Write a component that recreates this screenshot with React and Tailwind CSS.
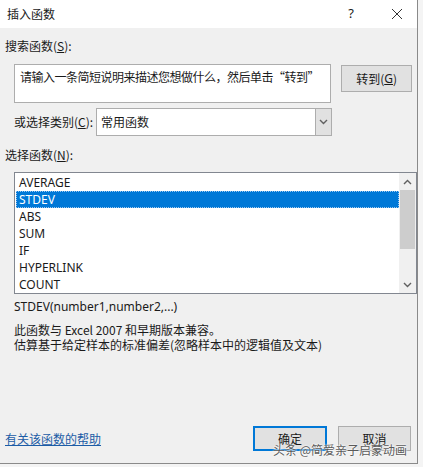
import React from 'react'

const cjk = { fontFamily: '"Noto Sans CJK SC", "Noto Sans", sans-serif' }
const lat = { fontFamily: '"Noto Sans", "Noto Sans CJK SC", sans-serif' }

const items = ['AVERAGE', 'STDEV', 'ABS', 'SUM', 'IF', 'HYPERLINK', 'COUNT']

function Chevron({ up }) {
  return (
    <svg width="9" height="6" viewBox="0 0 9 6" className="block">
      <path d={up ? 'M1 5 L4.5 1.5 L8 5' : 'M1 1 L4.5 4.5 L8 1'} fill="none" stroke="#606060" strokeWidth="1.4" />
    </svg>
  )
}

export default function App() {
  return (
    <div className="w-[423px] h-[467px] bg-[#f4f4f4] overflow-hidden text-[12px] text-[#1a1a1a]" style={cjk}>
      <div className="w-[418px] h-[464px] border-r border-b border-[#8a8a8a] flex flex-col">
        {/* title bar */}
        <div className="h-[28px] bg-white flex items-center pl-[7px] shrink-0">
          <span className="text-[12px] leading-none">插入函数</span>
          <span className="ml-auto w-[12px] text-center text-[13px] mr-[34px]" style={lat}>?</span>
          <svg width="12" height="12" viewBox="0 0 12 12" className="mr-[14px]">
            <path d="M1 1 L11 11 M11 1 L1 11" stroke="#333" strokeWidth="1" />
          </svg>
        </div>

        <div className="flex-1 bg-[#f0f0f0] flex flex-col px-[5px]">
          <div className="mt-[10px] h-[16px] leading-[16px]">
            搜索函数(<span className="underline">S</span>):
          </div>

          <div className="mt-[10px] flex items-start pl-[9px]">
            <div className="w-[318px] h-[39px] bg-white border border-[#adadad] px-[5px] pt-[4px] leading-[16px] whitespace-nowrap tracking-[-0.5px]">
              请输入一条简短说明来描述您想做什么，然后单击“转到”
            </div>
            <button className="ml-[10px] mt-[1px] w-[71px] h-[27px] bg-[#e1e1e1] border border-[#adadad] flex items-center justify-center leading-none">
              转到(<span className="underline" style={lat}>G</span>)
            </button>
          </div>

          <div className="mt-[5px] flex items-center pl-[9px]">
            <span className="w-[82px] leading-[16px]">
              或选择类别(<span className="underline">C</span>):
            </span>
            <div className="w-[236px] h-[28px] bg-white border border-[#adadad] flex items-center">
              <span className="pl-[4px] flex-1">常用函数</span>
              <div className="w-[16px] h-full bg-[#e1e1e1] border-l border-[#adadad] flex items-center justify-center">
                <Chevron />
              </div>
            </div>
          </div>

          <div className="mt-[11px] h-[16px] leading-[16px]">
            选择函数(<span className="underline">N</span>):
          </div>

          <div className="mt-[9px] ml-[9px] w-[403px] h-[122px] bg-white border border-[#828790] flex">
            <div className="flex-1 pt-[1px] pl-[1px]" style={lat}>
              {items.map((it) =>
                it === 'STDEV' ? (
                  <div key={it} className="h-[17px] leading-[17px] pl-[3px] bg-[#0078d7] text-white outline outline-1 outline-dotted outline-[#9cc7f0] -outline-offset-1">
                    {it}
                  </div>
                ) : (
                  <div key={it} className="h-[17px] leading-[17px] pl-[3px]">
                    {it}
                  </div>
                )
              )}
            </div>
            <div className="w-[17px] bg-[#f0f0f0] flex flex-col">
              <div className="h-[17px] flex items-center justify-center"><Chevron up /></div>
              <div className="h-[59px] mx-[1px] bg-[#cdcdcd]"></div>
              <div className="flex-1"></div>
              <div className="h-[17px] flex items-center justify-center"><Chevron /></div>
            </div>
          </div>

          <div className="mt-[5px] pl-[9px] h-[16px] leading-[16px]" style={lat}>
            STDEV(number1,number2,...)
          </div>
          <div className="mt-[7px] pl-[9px] leading-[15px]">
            <div>此函数与 Excel 2007 和早期版本兼容。</div>
            <div>估算基于给定样本的标准偏差(忽略样本中的逻辑值及文本)</div>
          </div>

          <div className="mt-auto mb-[12px] flex items-center">
            <span className="text-[#1c5ca6] underline leading-[16px]">有关该函数的帮助</span>
            <div className="ml-auto relative flex gap-[11px] mr-[1px]">
              <button className="w-[74px] h-[25px] bg-[#e1e1e1] border-2 border-[#0078d7] flex items-center justify-center leading-none">
                确定
              </button>
              <button className="w-[73px] h-[25px] bg-[#e1e1e1] border border-[#adadad] flex items-center justify-center leading-none">
                取消
              </button>
              <span className="absolute right-[4px] top-[15px] text-[12px] text-[#5a5a5a] whitespace-nowrap" style={{ textShadow: '0 0 2px #fff, 0 0 2px #fff' }}>
                头条 @简爱亲子启蒙动画
              </span>
            </div>
          </div>
        </div>
      </div>
    </div>
  )
}
